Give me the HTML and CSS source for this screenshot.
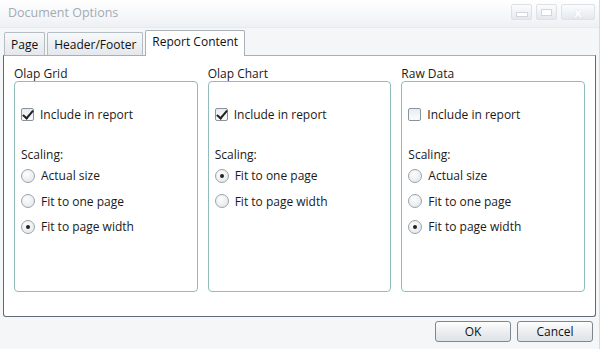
FILE: index.html
```html
<html lang="en">
<head>
<meta charset="UTF-8">
<title>Document Options</title>
<link rel="stylesheet" href="styles.css">
</head>
<body>

<div class="window">
  <div class="titlebar">
    <span class="title">Document Options</span>
    <div class="win-btns">
      <div class="win-btn min"><span></span></div>
      <div class="win-btn max"><span></span></div>
      <div class="win-btn close">x</div>
    </div>
  </div>

  <div class="tabs">
    <div class="tab">Page</div>
    <div class="tab">Header/Footer</div>
    <div class="tab active">Report Content</div>
  </div>

  <div class="panel">
    <!-- Olap Grid -->
    <div class="group">
      <div class="group-title">Olap Grid</div>
      <div class="group-box">
        <label class="row check"><span class="box checked"></span>Include in report</label>
        <div class="scaling">Scaling:</div>
        <label class="row"><span class="radio"></span>Actual size</label>
        <label class="row"><span class="radio"></span>Fit to one page</label>
        <label class="row"><span class="radio on"></span>Fit to page width</label>
      </div>
    </div>

    <!-- Olap Chart -->
    <div class="group">
      <div class="group-title">Olap Chart</div>
      <div class="group-box">
        <label class="row check"><span class="box checked"></span>Include in report</label>
        <div class="scaling">Scaling:</div>
        <label class="row"><span class="radio on"></span>Fit to one page</label>
        <label class="row"><span class="radio"></span>Fit to page width</label>
      </div>
    </div>

    <!-- Raw Data -->
    <div class="group">
      <div class="group-title">Raw Data</div>
      <div class="group-box">
        <label class="row check"><span class="box"></span>Include in report</label>
        <div class="scaling">Scaling:</div>
        <label class="row"><span class="radio"></span>Actual size</label>
        <label class="row"><span class="radio"></span>Fit to one page</label>
        <label class="row"><span class="radio on"></span>Fit to page width</label>
      </div>
    </div>
  </div>

  <div class="footer">
    <button class="btn">OK</button>
    <button class="btn">Cancel</button>
  </div>
</div>

</body>
</html>
```

FILE: styles.css
```css
body {
  font-family: 'Open Sans', 'DejaVu Sans', sans-serif;
  font-size: 12px;
  margin: 0;
  padding: 0;
  background-color: #f4f6f8;
  color: #1a1a1a;
}
.window {
  width: 600px;
  height: 349px;
  display: flex;
  flex-direction: column;
  border-right: 1px solid #d6dbe0;
  box-sizing: border-box;
}
.titlebar {
  height: 28px;
  display: flex;
  justify-content: space-between;
  align-items: flex-start;
  padding-left: 8px;
  background: linear-gradient(#ffffff, #eef1f4);
  border-bottom: 1px solid #e6eaee;
  box-sizing: border-box;
}
.title {
  color: #a3abb3;
  font-size: 12.5px;
  line-height: 26px;
}
.win-btns {
  display: flex;
  gap: 4px;
  margin-top: 4px;
  margin-right: 4px;
}
.win-btn {
  width: 21px;
  height: 16px;
  border: 1px solid #dde2e7;
  border-radius: 2px;
  background: linear-gradient(#fbfcfd, #eef1f4 60%, #e3e8ed);
  box-sizing: border-box;
  display: flex;
  align-items: center;
  justify-content: center;
}
.win-btn.close {
  width: 34px;
  color: #ffffff;
  font-weight: bold;
  font-size: 13px;
  text-shadow: 0 0 1px #c9d0d6;
  line-height: 14px;
}
.win-btn.min span {
  width: 10px;
  height: 3px;
  border: 1px solid #d0d6dc;
  background: #fff;
  margin-top: 4px;
}
.win-btn.max span {
  width: 9px;
  height: 5px;
  border: 1px solid #d0d6dc;
  background: #fff;
}
.tabs {
  display: flex;
  align-items: flex-end;
  gap: 2px;
  padding-left: 4px;
  height: 26px;
  margin-top: 1px;
}
.tab {
  height: 23px;
  padding: 0 6px;
  line-height: 23px;
  border: 1px solid #b4bcc4;
  border-bottom: none;
  border-radius: 2px 2px 0 0;
  background: linear-gradient(#f7f8f9, #e4e8ec);
  box-sizing: border-box;
  color: #111;
}
.tab.active {
  height: 26px;
  line-height: 22px;
  padding: 0 6px;
  background: #fff;
  position: relative;
  top: 1px;
  border-color: #a8b1ba;
}
.panel {
  margin: 0 3px;
  height: 262px;
  background: #fff;
  border: 1px solid #5e6a75;
  border-top-color: #a6afb8;
  border-radius: 0 0 3px 3px;
  display: flex;
  gap: 10px;
  padding: 10px 10px 0 10px;
  box-sizing: border-box;
}
.group {
  width: 184px;
  display: flex;
  flex-direction: column;
}
.group-title {
  height: 15px;
  line-height: 15px;
}
.group-box {
  height: 211px;
  border: 1px solid #90bdbc;
  border-radius: 4px;
  padding: 23px 6px 0 6px;
  box-sizing: border-box;
  display: flex;
  flex-direction: column;
}
.row {
  display: flex;
  align-items: center;
  gap: 6px;
  height: 25.5px;
}
.row.check {
  height: 18px;
  margin-bottom: 23px;
}
.scaling {
  height: 18px;
  line-height: 18px;
  margin-bottom: -1px;
}
.box {
  width: 13px;
  height: 13px;
  border: 1px solid #8a939c;
  border-radius: 2px;
  background: linear-gradient(#e9ecef, #fbfcfd);
  box-sizing: border-box;
  position: relative;
}
.box.checked::after {
  content: "";
  position: absolute;
  left: 3px;
  top: -1px;
  width: 4px;
  height: 9px;
  border-right: 2px solid #222;
  border-bottom: 2px solid #222;
  transform: rotate(40deg);
}
.radio {
  width: 14px;
  height: 14px;
  border: 1px solid #9aa3ac;
  border-radius: 50%;
  background: radial-gradient(circle at 40% 35%, #fdfdfd, #dfe3e7);
  box-sizing: border-box;
  display: flex;
  align-items: center;
  justify-content: center;
}
.radio.on::after {
  content: "";
  width: 4px;
  height: 4px;
  border-radius: 50%;
  background: #222;
}
.footer {
  display: flex;
  justify-content: flex-end;
  gap: 6px;
  padding: 4px 6px 0 0;
}
.btn {
  width: 76px;
  height: 21px;
  font-family: 'Open Sans', 'DejaVu Sans', sans-serif;
  font-size: 12px;
  color: #111;
  border: 1px solid #7d8790;
  border-radius: 3px;
  background: linear-gradient(#fdfdfd, #eceef0 50%, #dfe3e6);
  padding: 0;
}
```
